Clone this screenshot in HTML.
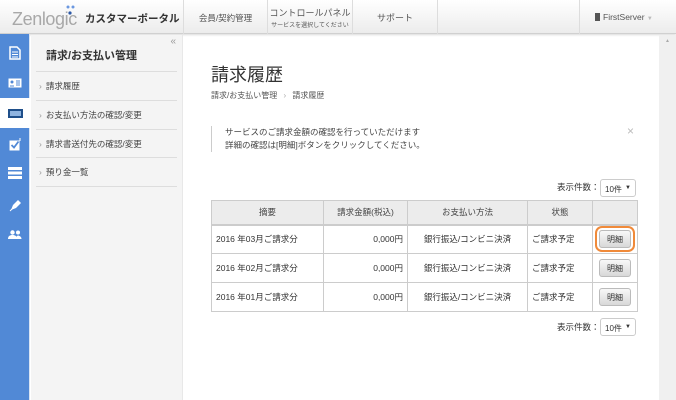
<!DOCTYPE html><html><head><meta charset="utf-8"><style>
*{margin:0;padding:0;box-sizing:border-box}
body{width:676px;height:400px;overflow:hidden;font-family:"Liberation Sans","Noto Sans CJK JP",sans-serif;color:#333;background:#fff;position:relative;font-size:9px}
.hdr{position:absolute;left:0;top:0;width:676px;height:34px;background:linear-gradient(#fff,#ececec);border-bottom:1px solid #d0d0d0;box-shadow:0 1px 2px rgba(0,0,0,.15)}
.logo{position:absolute;left:12px;top:9px;font-size:18px;color:#a8a8a8;letter-spacing:-0.4px}
.dots{position:absolute;left:66px;top:5px}
.logo2{position:absolute;left:85px;top:11px;font-size:10.5px;color:#333;font-weight:bold;white-space:nowrap}
.nav{position:absolute;top:0;height:34px;border-left:1px solid #ddd;text-align:center;color:#555;font-size:8.5px;white-space:nowrap}
.ib{position:absolute;left:0;top:34px;width:30px;height:366px;background:#5189d6;border-right:1px solid #d9e4f3}
.ic{position:absolute;left:0;width:30px;height:30px;display:flex;align-items:center;justify-content:center}
.side{position:absolute;left:31px;top:35px;width:152px;height:365px;background:#f4f4f4;border-right:1px solid #e8e8e8}
.side h2{position:absolute;left:15px;top:12px;font-size:11px;font-weight:bold;color:#333}
.mi{position:absolute;left:5px;width:141px;height:29px;border-top:1px solid #ddd;font-size:8.5px;color:#444;padding:8px 0 0 3px}
.mi span{color:#999;margin-right:4px}
.sb{position:absolute;left:659px;top:35px;width:17px;height:365px;background:#f0f0f0}
table{position:absolute;left:211px;top:200px;width:427px;border-collapse:collapse;font-size:8.5px}
td,th{border:1px solid #ccc;height:29px;padding:0 4px}
th{background:#ececec;font-weight:normal;height:24px;color:#444;border-bottom:2px solid #ccc}
.btn{display:inline-block;width:32px;height:18px;line-height:17px;text-align:center;border:1px solid #bbb;border-radius:3px;background:linear-gradient(#f8f8f8,#d8d8d8);font-size:8px}
.sel{position:absolute;width:36px;height:18px;border:1px solid #ccc;border-radius:3px;background:#fff;font-size:8px;padding:4px 0 0 4px}
.sel b{position:absolute;right:4px;top:5px;font-size:6px}
</style></head><body>
<div class="hdr">
<div class="logo">Zenlogic</div>
<svg class="dots" width="12" height="12"><circle cx="2" cy="2" r="1.5" fill="#6b98e0"/><circle cx="7" cy="2" r="1.5" fill="#6b98e0"/><circle cx="4" cy="8" r="1.6" fill="#2c58a6"/></svg>
<div class="logo2">カスタマーポータル</div>
<div class="nav" style="left:183px;width:84px;padding-top:12px">会員/契約管理</div>
<div class="nav" style="left:267px;width:85px;padding-top:6px;font-size:9px">コントロールパネル<br><span style="font-size:6px">サービスを選択してください</span></div>
<div class="nav" style="left:352px;width:85px;padding-top:11px;font-size:9px">サポート</div>
<div class="nav" style="left:437px;width:0"></div>
<div class="nav" style="left:579px;width:97px;padding-top:12px;text-align:left;padding-left:15px;font-size:8.5px"><span style="display:inline-block;width:5px;height:8px;background:#555;vertical-align:-1px;margin-right:3px"></span>FirstServer <span style="color:#bbb;font-size:6px">▼</span></div>
</div>
<div class="ib">
<div class="ic" style="top:4px"><svg width="12" height="14"><path d="M1 1h7l3 3v9H1z" fill="none" stroke="#fff" stroke-width="1.5"/><path d="M3 6h6M3 8.5h6M3 11h6" stroke="#fff"/></svg></div>
<div class="ic" style="top:34px"><svg width="14" height="10"><rect x="0.5" y="0.5" width="13" height="9" fill="#fff"/><circle cx="4" cy="4" r="1.5" fill="#5189d6"/><path d="M2 8h4M8 3h4M8 5h4M8 7h4" stroke="#5189d6"/></svg></div>
<div class="ic" style="top:64px;background:#fff;width:30px"><svg width="15" height="9"><rect x="0" y="0" width="15" height="9" fill="#1f4f8a"/><rect x="2" y="2" width="11" height="5" fill="#8fb4e0"/></svg></div>
<div class="ic" style="top:95px"><svg width="13" height="13"><rect x="0.5" y="2.5" width="10" height="10" fill="#fff"/><path d="M2.5 7l2.5 2.5 4.5-6" stroke="#5189d6" stroke-width="1.8" fill="none"/><path d="M11 0v3" stroke="#fff"/></svg></div>
<div class="ic" style="top:124px"><svg width="14" height="12"><rect x="0" y="0" width="14" height="3" fill="#fff"/><rect x="0" y="4.5" width="14" height="3" fill="#fff"/><rect x="0" y="9" width="14" height="3" fill="#fff"/></svg></div>
<div class="ic" style="top:156px"><svg width="13" height="13"><path d="M2 11l2-5 5-5 3 3-5 5z" fill="#fff"/><path d="M1 12l3-3" stroke="#fff"/></svg></div>
<div class="ic" style="top:186px"><svg width="14" height="10"><circle cx="4.5" cy="2.5" r="2.2" fill="#fff"/><circle cx="10" cy="2.5" r="2" fill="#fff"/><path d="M0 9c0-3 2-4 4.5-4s4.5 1 4.5 4zM8 9c0-2 1-3.5 2-3.5s3.5 1 3.5 3.5z" fill="#fff"/></svg></div>
</div>
<div class="side">
<div style="position:absolute;right:6px;top:1px;color:#999;font-size:10px">«</div>
<h2>請求/お支払い管理</h2>
<div class="mi" style="top:36px"><span>›</span>請求履歴</div>
<div class="mi" style="top:65px"><span>›</span>お支払い方法の確認/変更</div>
<div class="mi" style="top:94px"><span>›</span>請求書送付先の確認/変更</div>
<div class="mi" style="top:122px;height:30px;border-bottom:1px solid #ddd"><span>›</span>預り金一覧</div>
</div>
<div class="sb"><div style="color:#aaa;font-size:5px;text-align:center;margin-top:3px">▲</div></div>
<div style="position:absolute;left:211px;top:61px;font-size:18px;color:#333">請求履歴</div>
<div style="position:absolute;left:211px;top:90px;font-size:8px;color:#555">請求/お支払い管理 <span style="color:#aaa;margin:0 4px">›</span> 請求履歴</div>
<div style="position:absolute;left:211px;top:126px;height:26px;border-left:1px solid #ccc;padding-left:13px;font-size:8.5px;line-height:13px;color:#444">サービスのご請求金額の確認を行っていただけます<br>詳細の確認は[明細]ボタンをクリックしてください。</div>
<div style="position:absolute;left:627px;top:124px;color:#bbb;font-size:12px">×</div>
<div style="position:absolute;left:557px;top:181px;font-size:8.5px">表示件数：</div>
<div class="sel" style="left:600px;top:179px">10件<b>▼</b></div>
<table>
<tr><th style="width:112px">摘要</th><th style="width:84px">請求金額(税込)</th><th style="width:120px">お支払い方法</th><th style="width:65px">状態</th><th></th></tr>
<tr><td>2016 年03月ご請求分</td><td style="text-align:right">0,000円</td><td style="text-align:center">銀行振込/コンビニ決済</td><td>ご請求予定</td><td style="text-align:center"><span class="btn" style="box-shadow:0 0 0 2px #fff,0 0 0 4px #f08a3a">明細</span></td></tr>
<tr><td>2016 年02月ご請求分</td><td style="text-align:right">0,000円</td><td style="text-align:center">銀行振込/コンビニ決済</td><td>ご請求予定</td><td style="text-align:center"><span class="btn">明細</span></td></tr>
<tr><td>2016 年01月ご請求分</td><td style="text-align:right">0,000円</td><td style="text-align:center">銀行振込/コンビニ決済</td><td>ご請求予定</td><td style="text-align:center"><span class="btn">明細</span></td></tr>
</table>
<div style="position:absolute;left:557px;top:321px;font-size:8.5px">表示件数：</div>
<div class="sel" style="left:600px;top:318px">10件<b>▼</b></div>
</body></html>
